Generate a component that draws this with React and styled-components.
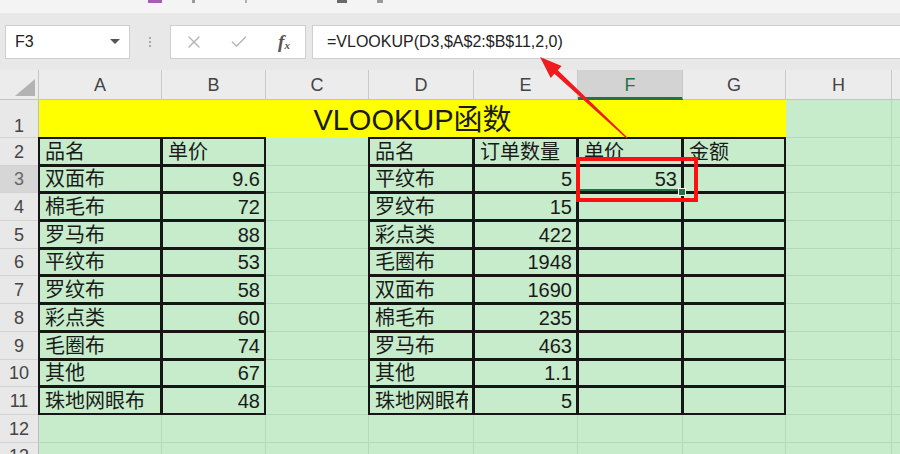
import React from "react";
import styled, { createGlobalStyle } from "styled-components";
import { X, Check } from "lucide-react";

const GlobalStyle = createGlobalStyle`
  html, body {
    margin: 0;
    padding: 0;
    background: #e8e8e8;
  }
  body {
    font-family: "Liberation Sans", "Noto Sans CJK SC", sans-serif;
  }
`;

const Page = styled.div`
  position: relative;
  width: 900px;
  height: 454px;
  overflow: hidden;
  background: #e8e8e8;
`;

const Ribbon = styled.div`
  height: 13px;
  background: #f4f4f4;
  display: flex;
  align-items: flex-start;
  padding-left: 148px;
  gap: 30px;
`;

const RibbonMark = styled.span`
  display: block;
  width: ${(p) => p.$w}px;
  height: ${(p) => p.$h}px;
  background: ${(p) => p.$c};
  margin-left: ${(p) => p.$ml || 0}px;
`;

const FormulaBar = styled.div`
  display: flex;
  align-items: center;
  height: 57px;
  padding: 0 0 0 5px;
  box-sizing: border-box;
  background: #e8e8e8;
`;

const NameBox = styled.div`
  width: 125px;
  height: 34px;
  box-sizing: border-box;
  background: #fff;
  border: 1px solid #cfcfcf;
  display: flex;
  align-items: center;
  justify-content: space-between;
  padding: 0 9px 0 9px;
  font-size: 16px;
  color: #222;
`;

const DropArrow = styled.span`
  width: 0;
  height: 0;
  border-left: 5px solid transparent;
  border-right: 5px solid transparent;
  border-top: 5px solid #555;
`;

const Grip = styled.div`
  width: 40px;
  display: flex;
  flex-direction: column;
  align-items: center;
  gap: 2px;

  & > span {
    width: 2px;
    height: 2px;
    background: #a8a8a8;
  }
`;

const ButtonBox = styled.div`
  width: 136px;
  height: 34px;
  box-sizing: border-box;
  background: #fff;
  border: 1px solid #cfcfcf;
  display: grid;
  grid-template-columns: 45px 45px 46px;
  align-items: center;
  justify-items: center;
  color: #b4b4b4;
`;

const Fx = styled.i`
  font-family: "Liberation Serif", serif;
  font-size: 19px;
  color: #555;
  font-weight: bold;

  & > sub {
    font-size: 11px;
    vertical-align: -1px;
  }
`;

const FormulaInput = styled.div`
  flex: 1;
  height: 34px;
  margin-left: 6px;
  box-sizing: border-box;
  background: #fff;
  border: 1px solid #cfcfcf;
  border-right: none;
  display: flex;
  align-items: center;
  padding-left: 14px;
  font-size: 16px;
  color: #222;
`;

const Sheet = styled.div`
  display: grid;
  grid-template-columns: 39px 123px 104px 103px 105px 104px 105px 103px 106px 1fr;
  grid-template-rows: 30px 38px;
  grid-auto-rows: 27.7px;
`;

const Corner = styled.div`
  background: #ececec;
  border-right: 1px solid #c4c4c4;
  border-bottom: 1px solid #c4c4c4;
  display: flex;
  align-items: flex-end;
  justify-content: flex-end;
  padding: 0 3px 3px 0;

  &::before {
    content: "";
    width: 0;
    height: 0;
    border-left: 20px solid transparent;
    border-bottom: 17px solid #b3b3b3;
  }
`;

const ColHead = styled.div`
  box-sizing: border-box;
  background: ${(p) => (p.$active ? "#d3d3d3" : "#ececec")};
  color: ${(p) => (p.$active ? "#217346" : "#444")};
  border-right: 1px solid #c9c9c9;
  border-bottom: ${(p) => (p.$active ? "3px solid #217346" : "1px solid #c4c4c4")};
  display: flex;
  align-items: center;
  justify-content: center;
  padding-top: ${(p) => (p.$active ? 3 : 1)}px;
  font-size: 18px;
`;

const RowHead = styled.div`
  box-sizing: border-box;
  background: ${(p) => (p.$active ? "#d6d6d6" : "#e8e8e8")};
  color: ${(p) => (p.$active ? "#666" : "#444")};
  border-right: 1px solid #bdbdbd;
  border-bottom: 1px solid #d2d2d2;
  display: flex;
  align-items: flex-end;
  justify-content: center;
  padding-bottom: ${(p) => (p.$tall ? 0 : 2)}px;
  font-size: 18px;
  line-height: 22px;
`;

const Title = styled.div`
  grid-column: span 7;
  background: #ffff00;
  display: flex;
  align-items: flex-end;
  justify-content: center;
  font-size: 29px;
  line-height: 36px;
  color: #1a1a1a;
`;

const Cell = styled.div`
  box-sizing: border-box;
  background: #c6eccb;
  border-right: 1px solid #b3d9b8;
  border-bottom: 1px solid #b3d9b8;
  display: flex;
  align-items: flex-end;
  justify-content: ${(p) => (p.$right ? "flex-end" : "flex-start")};
  padding: 0 5px 0 6px;
  font-size: 20px;
  line-height: 25px;
  color: #1a1a1a;
  white-space: nowrap;
  overflow: ${(p) => (p.$boxed ? "visible" : "hidden")};
  position: ${(p) => (p.$boxed ? "relative" : "static")};

  ${(p) =>
    p.$boxed &&
    `
    &::after {
      content: "";
      position: absolute;
      inset: -1px;
      border: 2px solid #161616;
      pointer-events: none;
    }
  `}

  ${(p) =>
    p.$selected &&
    `
    box-shadow: inset 0 -3px 0 #217346;
  `}
`;

const CellText = styled.span`
  display: block;
  overflow: hidden;
  max-width: 100%;
`;

const Handle = styled.span`
  position: absolute;
  right: -4px;
  bottom: -4px;
  width: 6px;
  height: 6px;
  background: #217346;
  border: 1px solid #fff;
  z-index: 2;
`;

const Overlay = styled.svg`
  position: absolute;
  left: 0;
  top: 0;
  width: 900px;
  height: 454px;
  pointer-events: none;
`;

const COLS = ["A", "B", "C", "D", "E", "F", "G", "H", "I"];

const leftTable = [
  ["品名", "单价"],
  ["双面布", "9.6"],
  ["棉毛布", "72"],
  ["罗马布", "88"],
  ["平纹布", "53"],
  ["罗纹布", "58"],
  ["彩点类", "60"],
  ["毛圈布", "74"],
  ["其他", "67"],
  ["珠地网眼布", "48"],
];

const rightTable = [
  ["品名", "订单数量", "单价", "金额"],
  ["平纹布", "5", "53", ""],
  ["罗纹布", "15", "", ""],
  ["彩点类", "422", "", ""],
  ["毛圈布", "1948", "", ""],
  ["双面布", "1690", "", ""],
  ["棉毛布", "235", "", ""],
  ["罗马布", "463", "", ""],
  ["其他", "1.1", "", ""],
  ["珠地网眼布", "5", "", ""],
];

const cellValue = (row, col) => {
  const i = row - 2;
  if (i < 0 || i > 9) return null;
  if (col === 0 || col === 1) return leftTable[i][col];
  if (col >= 3 && col <= 6) return rightTable[i][col - 3];
  return null;
};

const isNumber = (v) => v !== "" && !isNaN(Number(v));

export default function App() {
  const rows = [];
  for (let r = 2; r <= 13; r++) {
    rows.push(
      <RowHead key={`rh${r}`} $active={r === 3}>
        {r}
      </RowHead>
    );
    COLS.forEach((c, ci) => {
      const v = cellValue(r, ci);
      const boxed = v !== null;
      const selected = r === 3 && c === "F";
      rows.push(
        <Cell
          key={`${c}${r}`}
          $boxed={boxed}
          $right={boxed && r > 2 && isNumber(v)}
          $selected={selected}
        >
          {v && <CellText>{v}</CellText>}
          {selected && <Handle />}
        </Cell>
      );
    });
  }

  return (
    <Page>
      <GlobalStyle />
      <Ribbon>
        <RibbonMark $w={14} $h={3} $c="#a45db3" />
        <RibbonMark $w={3} $h={3} $c="#9a9a9a" />
        <RibbonMark $w={2} $h={3} $c="#b0b0b0" $ml={20} />
        <RibbonMark $w={10} $h={3} $c="#6a6a6a" $ml={60} />
        <RibbonMark $w={6} $h={3} $c="#9a9a9a" />
      </Ribbon>
      <FormulaBar>
        <NameBox>
          <span>F3</span>
          <DropArrow />
        </NameBox>
        <Grip>
          <span />
          <span />
          <span />
        </Grip>
        <ButtonBox>
          <X size={20} strokeWidth={1.6} />
          <Check size={20} strokeWidth={1.6} />
          <Fx>
            f<sub>x</sub>
          </Fx>
        </ButtonBox>
        <FormulaInput>=VLOOKUP(D3,$A$2:$B$11,2,0)</FormulaInput>
      </FormulaBar>
      <Sheet>
        <Corner />
        {COLS.map((c) => (
          <ColHead key={c} $active={c === "F"}>
            {c === "I" ? "" : c}
          </ColHead>
        ))}
        <RowHead $tall>1</RowHead>
        <Title>VLOOKUP函数</Title>
        <Cell />
        <Cell />
        {rows}
      </Sheet>
      <Overlay viewBox="0 0 900 454">
        <rect
          x="578"
          y="159"
          width="118"
          height="41"
          fill="none"
          stroke="#ff1010"
          strokeWidth="4"
        />
        <polygon
          points="540,57 561.6,66.1 557.8,70.2 627.5,137.5 626.5,138.5 554.4,73.8 550.7,77.9"
          fill="#f01c1c"
        />
      </Overlay>
    </Page>
  );
}
